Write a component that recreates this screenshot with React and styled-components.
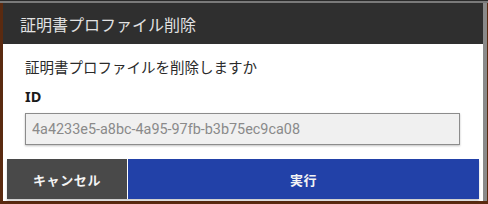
import React from "react";
import styled, { createGlobalStyle } from "styled-components";

const GlobalStyle = createGlobalStyle`
  html, body {
    margin: 0;
    padding: 0;
    background: #4a1c06;
  }
  body {
    font-family: "Noto Sans CJK JP", "Noto Sans", sans-serif;
  }
`;

const Backdrop = styled.div`
  width: 488px;
  height: 204px;
  box-sizing: border-box;
  padding: 3px 1px 0 3px;
  background: linear-gradient(#2a2a2a 0 1px, #7a7a7a 1px 3px, transparent 3px),
    #5a2a10;
  display: flex;
  overflow: hidden;
`;

const Frame = styled.div`
  display: flex;
  border-right: 4px solid #8a8a8a;
  height: 198px;
`;

const Dialog = styled.div`
  width: 480px;
  background: #fff;
  display: flex;
  flex-direction: column;
`;

const Header = styled.div`
  height: 41px;
  background: #2f2f2f;
  color: #e2e2e2;
  font-size: 16px;
  display: flex;
  align-items: center;
  padding-left: 17px;
  padding-top: 1px;
  box-sizing: border-box;
`;

const Body = styled.div`
  padding: 12px 23px 0 22px;
  display: flex;
  flex-direction: column;
`;

const Message = styled.p`
  margin: 0;
  font-size: 14.5px;
  line-height: 22px;
  color: #2a2a2a;
`;

const Label = styled.label`
  margin-top: 8px;
  font-family: "Noto Sans", sans-serif;
  font-weight: 700;
  font-size: 14.5px;
  line-height: 20px;
  color: #1a1a1a;
`;

const Field = styled.input`
  margin-top: 7px;
  height: 32px;
  box-sizing: border-box;
  border: 1px solid #8c8c8c;
  background: #f0f0f0;
  box-shadow: 0 1px 2px rgba(0, 0, 0, 0.25);
  padding: 0 6px;
  font-family: Roboto, "Noto Sans", sans-serif;
  font-size: 14.4px;
  color: #8a8a8a;
  outline: none;
`;

const Actions = styled.div`
  display: flex;
  gap: 1px;
  margin: 14px 4px 0;
  box-shadow: 0 2px 2px rgba(0, 0, 0, 0.2);
`;

const Button = styled.button`
  height: 40px;
  border: none;
  flex: ${(p) => (p.$primary ? 1 : "0 0 120px")};
  background: ${(p) => (p.$primary ? "#2241a8" : "#494949")};
  color: #f4f4f4;
  font-family: "Noto Sans CJK JP", sans-serif;
  font-weight: 700;
  font-size: 13px;
  letter-spacing: 0.6px;
  cursor: pointer;
`;

export default function App() {
  return (
    <>
      <GlobalStyle />
      <Backdrop>
        <Frame>
          <Dialog>
            <Header>証明書プロファイル削除</Header>
            <Body>
              <Message>証明書プロファイルを削除しますか</Message>
              <Label>ID</Label>
              <Field readOnly value="4a4233e5-a8bc-4a95-97fb-b3b75ec9ca08" />
            </Body>
            <Actions>
              <Button>キャンセル</Button>
              <Button $primary>実行</Button>
            </Actions>
          </Dialog>
        </Frame>
      </Backdrop>
    </>
  );
}
